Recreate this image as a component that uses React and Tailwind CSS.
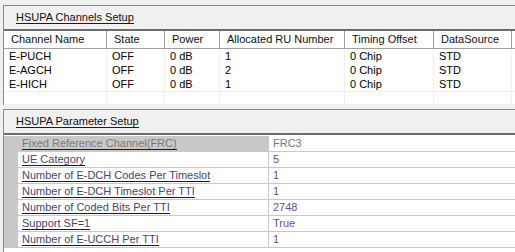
const channels = [
  ['E-PUCH', 'OFF', '0 dB', '1', '0 Chip', 'STD'],
  ['E-AGCH', 'OFF', '0 dB', '2', '0 Chip', 'STD'],
  ['E-HICH', 'OFF', '0 dB', '1', '0 Chip', 'STD'],
];

const columns = [
  { name: 'Channel Name', w: 'w-[103px]' },
  { name: 'State', w: 'w-[58px]' },
  { name: 'Power', w: 'w-[55px]' },
  { name: 'Allocated RU Number', w: 'w-[125px]' },
  { name: 'Timing Offset', w: 'w-[89px]' },
  { name: 'DataSource', w: 'w-[78px]' },
];

const params = [
  ['Fixed Reference Channel(FRC)', 'FRC3', true],
  ['UE Category', '5'],
  ['Number of E-DCH Codes Per Timeslot', '1'],
  ['Number of E-DCH Timeslot Per TTI', '1'],
  ['Number of Coded Bits Per TTI', '2748'],
  ['Support SF=1', 'True'],
  ['Number of E-UCCH Per TTI', '1'],
];

// link-style label: dark text, blue underline
function Link({ children }) {
  return <span className="inline-block leading-[12px] border-b border-[#0000ff]">{children}</span>;
}

function Header({ title }) {
  return (
    <div className="h-[25px] bg-[#f0f0f0] border-b-2 border-[#6d6d6d] flex items-center pl-[12px] text-[#111]">
      <Link>{title}</Link>
    </div>
  );
}

export default function App() {
  return (
    <div className="w-[515px] h-[252px] overflow-hidden bg-[#f0f0f0] pt-[5px] pl-[3px] font-['Liberation_Sans',sans-serif] text-[11px] leading-none text-black">
      <div className="border-t border-l border-[#8a8a8a] h-[100px] flex flex-col">
        <Header title="HSUPA Channels Setup" />
        <div className="flex-1 bg-white flex flex-col">
          <div className="flex h-[18px] border-b border-[#a0a0a0]">
            {columns.map((c) => (
              <div key={c.name} className={`${c.w} shrink-0 border-r border-[#a0a0a0] flex items-center pl-[7px] text-[#111] whitespace-nowrap`}>
                {c.name}
              </div>
            ))}
          </div>
          {channels.map((row) => (
            <div key={row[0]} className="flex h-[14px]">
              {row.map((v, i) => (
                <div key={i} className={`${columns[i].w} shrink-0 border-r border-[#f0f0f0] flex items-center pl-[5px]`}>
                  {v}
                </div>
              ))}
            </div>
          ))}
          <div className="flex h-[14px] border-t border-b border-[#f0f0f0]">
            {columns.map((c) => (
              <div key={c.name} className={`${c.w} shrink-0 border-r border-[#f0f0f0]`} />
            ))}
          </div>
        </div>
      </div>
      <div className="mt-[4px] border-t border-l border-[#8a8a8a] h-[200px] flex flex-col bg-white">
        <Header title="HSUPA Parameter Setup" />
        <div className="mt-[1px]">
          {params.map(([name, value, ro]) => (
            <div key={name} className="flex h-[16px]">
              <div className="w-[14px] shrink-0 bg-[#c8c8c8]" />
              <div className={`w-[250px] shrink-0 border-b border-[#c8c8c8] flex items-center pl-[4px] ${ro ? 'bg-[#c8c8c8] text-[#7a7a7a]' : 'bg-white text-[#4a4470]'}`}>
                <Link>{name}</Link>
              </div>
              <div className={`flex-1 border-l border-b border-[#c8c8c8] flex items-center pl-[4px] ${ro ? 'text-[#7a7488]' : 'text-[#6c4d8c]'}`}>
                {value}
              </div>
            </div>
          ))}
        </div>
      </div>
    </div>
  );
}
